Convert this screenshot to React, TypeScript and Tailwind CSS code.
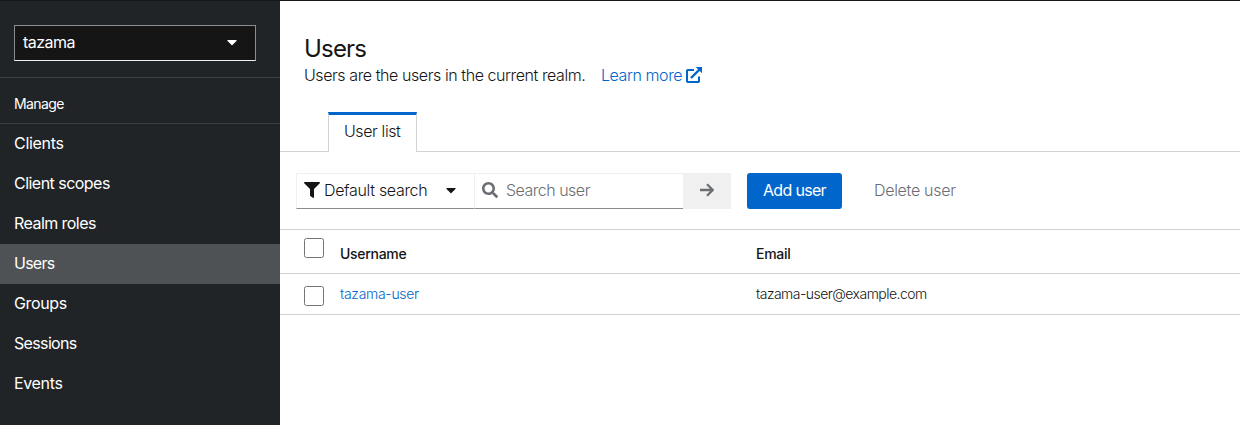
import React from "react";
import { FaCaretDown, FaFilter, FaSearch } from "react-icons/fa";

const navItems = [
  { label: "Clients", tracking: "tracking-[-0.3px]" },
  { label: "Client scopes", tracking: "tracking-[-0.53px]" },
  { label: "Realm roles", tracking: "tracking-[-0.55px]" },
  { label: "Users", tracking: "tracking-[-0.75px]" },
  { label: "Groups", tracking: "tracking-[-0.35px]" },
  { label: "Sessions", tracking: "tracking-[-0.65px]" },
  { label: "Events", tracking: "tracking-[-0.35px]" },
];

function ExternalLinkIcon() {
  return (
    <svg viewBox="0 0 16 16" className="size-4 fill-none stroke-[#0066cc] stroke-2">
      <path d="M8 3H1.8Q1 3 1 3.8V14.2Q1 15 1.8 15H12.2Q13 15 13 14.2V9.5" />
      <path d="M5 11L13.5 2.5" className="stroke-[2.4]" />
      <path d="M9.8 0H16V6.2Z" className="fill-[#0066cc] stroke-none" />
    </svg>
  );
}

function ArrowRightIcon() {
  return (
    <svg viewBox="0 0 14 14" className="size-3.5 fill-none stroke-[#6a6e73] stroke-[2.3]">
      <path d="M0 7H12.3M7 1.2L12.8 7L7 12.8" strokeLinejoin="round" />
    </svg>
  );
}

function Sidebar() {
  return (
    <aside className="flex w-[280px] shrink-0 flex-col bg-[#212427] text-white">
      <div className="h-[77px] border-b border-[#3c3f42] px-3.5 pt-6">
        <button className="flex h-9 w-[242px] items-center justify-between border border-[#8a8d90] border-b-[#f0f0f0] bg-[#151515] pr-[15px] pb-0.5 pl-2">
          <span className="tracking-[-0.55px]">tazama</span>
          <FaCaretDown className="size-4" />
        </button>
      </div>
      <h2 className="h-[46px] border-b border-[#3c3f42] px-3.5 pt-[15px] text-sm leading-[21px]">
        <span className="tracking-[-0.6px]">Manage</span>
      </h2>
      <nav>
        {navItems.map((item) => (
          <a
            key={item.label}
            className={`flex h-10 items-center px-3.5 pb-0.5 ${item.label === "Users" ? "bg-[#4f5255]" : ""}`}
          >
            <span className={item.tracking}>{item.label}</span>
          </a>
        ))}
      </nav>
    </aside>
  );
}

function Checkbox() {
  return <span className="block size-5 rounded-[2.5px] border border-[#767676] bg-white" />;
}

export default function App() {
  return (
    <div className="flex h-[425px] w-[1240px] overflow-hidden border-t border-[#151515] bg-white font-['Inter',sans-serif] text-base leading-6 text-[#151515]">
      <Sidebar />
      <main className="flex min-w-0 flex-1 flex-col font-light">
        <header className="h-[111px] px-6 pt-[33px]">
          <h1 className="text-2xl leading-[29px] font-normal">
            <span className="tracking-[-0.8px]">Users</span>
          </h1>
          <div className="flex items-start">
            <p className="w-[297px] whitespace-nowrap">
              <span className="tracking-[-0.42px]">Users are the users in the current realm.</span>
            </p>
            <a className="flex items-start text-[#0066cc]">
              <span className="w-[85px] whitespace-nowrap tracking-[-0.42px]">Learn more</span>
              <span className="pt-1"><ExternalLinkIcon /></span>
            </a>
          </div>
        </header>

        <div className="flex h-10">
          <div className="w-12 border-b border-[#d2d2d2]" />
          <div className="w-[89px] border-x border-t-[3px] border-x-[#d2d2d2] border-t-[#0066cc] pt-1 pl-[15px] whitespace-nowrap">
            <span className="tracking-[-0.4px]">User list</span>
          </div>
          <div className="flex-1 border-b border-[#d2d2d2]" />
        </div>

        <div className="flex h-[77px] items-start pt-[21px] pl-4">
          <button className="flex h-9 w-[178px] items-center border border-r-0 border-[#f0f0f0] border-b-[#8a8d90] pb-0.5 pl-[7px] whitespace-nowrap">
            <FaFilter className="size-4" />
            <span className="ml-1 w-[119px] text-left tracking-[-0.33px]">Default search</span>
            <FaCaretDown className="size-4" />
          </button>
          <div className="flex h-9 w-[209px] items-center border-y border-l border-[#f0f0f0] border-b-[#8a8d90] pb-0.5 pl-[7px] text-[#6a6e73]">
            <FaSearch className="size-4" />
            <span className="ml-2 tracking-[-0.5px]">Search user</span>
          </div>
          <button className="flex h-9 w-12 items-center justify-center bg-[#f0f0f0] pb-0.5">
            <ArrowRightIcon />
          </button>
          <button className="ml-4 h-9 w-[95px] rounded-[3px] bg-[#0066cc] pb-0.5 pl-4 text-left font-normal whitespace-nowrap text-white">
            <span className="tracking-[-0.68px]">Add user</span>
          </button>
          <button className="ml-8 h-9 pb-0.5 whitespace-nowrap text-[#6a6e73]">
            <span className="tracking-[-0.3px]">Delete user</span>
          </button>
        </div>

        <div className="text-sm leading-[21px]">
          <div className="flex h-[45px] border-y border-[#d2d2d2] pl-6 font-medium">
            <div className="w-9 pt-2"><Checkbox /></div>
            <div className="w-[416px] pt-[13px]"><span className="tracking-[-0.3px]">Username</span></div>
            <div className="pt-[13px]"><span className="tracking-[-0.3px]">Email</span></div>
          </div>
          <div className="flex h-[41px] border-b border-[#d2d2d2] pl-6">
            <div className="w-9 pt-3"><Checkbox /></div>
            <a className="w-[416px] pt-[9px] text-[#0066cc]"><span className="tracking-[-0.3px]">tazama-user</span></a>
            <div className="pt-[9px]"><span className="tracking-[-0.53px]">tazama-user@example.com</span></div>
          </div>
        </div>
      </main>
    </div>
  );
}
